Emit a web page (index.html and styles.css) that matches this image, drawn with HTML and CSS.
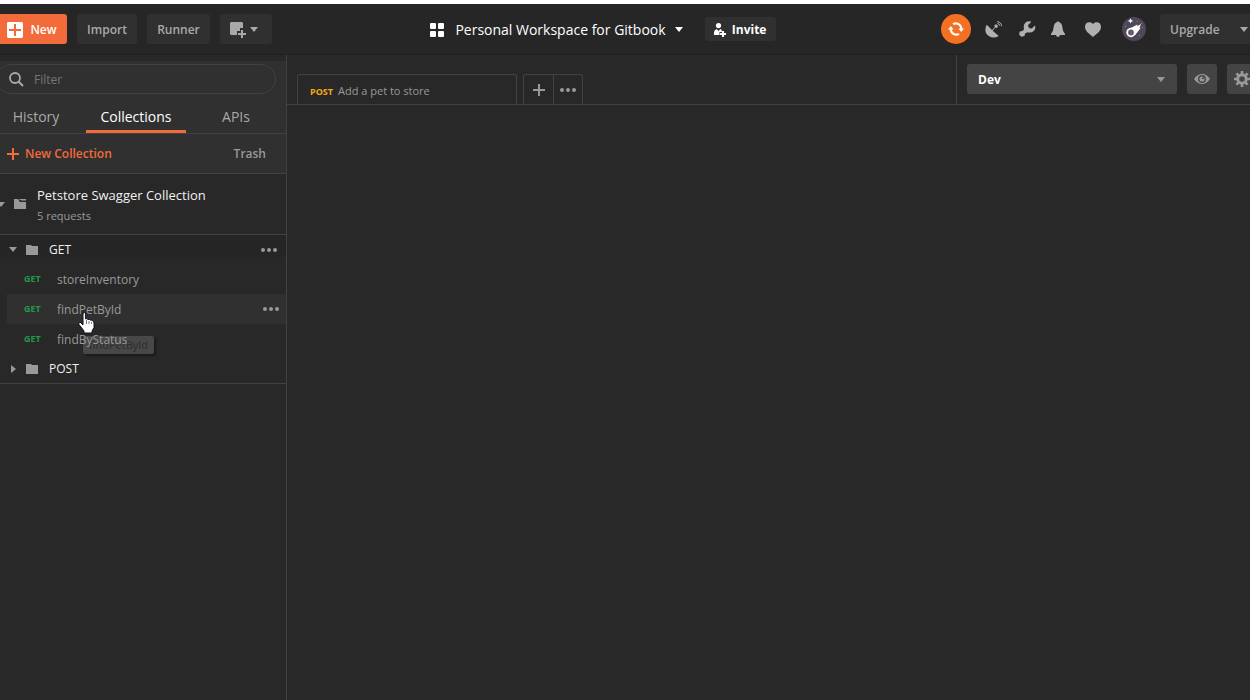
FILE: index.html
```html
<!DOCTYPE html>
<html lang="en">
<head>
<meta charset="utf-8">
<meta name="viewport" content="width=device-width, initial-scale=1">
<title>Personal Workspace for Gitbook</title>
<link rel="stylesheet" href="styles.css">
</head>
<body>
<svg class="defs" aria-hidden="true">
  <symbol id="folder" viewBox="0 0 12 10"><path d="M0 0h5l1 1h6v9H0z"/></symbol>
  <symbol id="dots" viewBox="0 0 16 4"><circle cx="2" cy="2" r="2"/><circle cx="8" cy="2" r="2"/><circle cx="14" cy="2" r="2"/></symbol>
  <symbol id="caret" viewBox="0 0 8 5"><path d="M0 0h8L4 5z"/></symbol>
  <symbol id="plus" viewBox="0 0 12 12"><path d="M5 0h2v5h5v2H7v5H5V7H0V5h5z"/></symbol>
</svg>
<header class="header">
  <div class="header-left">
    <button class="btn btn-new"><svg width="16" height="16" viewBox="0 0 16 16"><path fill-rule="evenodd" d="M1 0h14l1 1v14l-1 1H1l-1-1V1zM7 2v5H2v2h5v5h2V9h5V7H9V2z"/></svg>New</button>
    <button class="btn btn-import">Import</button>
    <button class="btn btn-runner">Runner</button>
    <button class="btn btn-window" aria-label="New window"><svg width="16" height="16" viewBox="0 0 16 16"><path d="M1 0h11l1 1v5h-3v3H7v4H1l-1-1V1zM11 8h2v3h3v2h-3v3h-2v-3H8v-2h3z"/></svg><svg width="8" height="5"><use href="#caret"/></svg></button>
  </div>
  <div class="workspace">
    <button class="workspace-name"><svg class="grid-icon" width="14" height="14" viewBox="0 0 14 14"><rect width="6" height="6" rx="1"/><rect x="8" width="6" height="6" rx="1"/><rect y="8" width="6" height="6" rx="1"/><rect x="8" y="8" width="6" height="6" rx="1"/></svg>Personal Workspace for Gitbook<svg width="8" height="5"><use href="#caret"/></svg></button>
    <button class="btn invite"><svg width="12" height="14" viewBox="0 0 12 14"><circle cx="4.500" cy="2.600" r="2.600"/><path d="M0 12V9.500Q0 7 2.500 6l2 2 2-2q1 .3 1.300 1.500v1.500H5.500v3zM8 8h2v2h2v2h-2v2H8v-2H6v-2h2z"/></svg>Invite</button>
  </div>
  <div class="header-right">
    <button class="icon-btn sync" aria-label="Sync"><svg width="16" height="16" viewBox="0 0 16 16"><path fill="none" stroke="currentColor" stroke-width="2" d="M5 3.200A5.500 5.500 0 0 1 13.300 8M11 12.800A5.500 5.500 0 0 1 2.700 8"/><path d="M10.300 7.500H16L13.200 11zM0 8.500h5.700L2.800 5z"/></svg></button>
    <button class="icon-btn satellite" aria-label="Capture requests"><svg width="17" height="17" viewBox="0 0 17 17"><path d="M1.800 3.800L7 9l3-3-.8-.8.800-1.700h1.800l1 1v1.700L11 7l-.8-.2-2.500 2.900 6 5.300Q8.500 18 3.800 15 .2 12.500.4 8.500 .5 5.500 1.800 3.800z"/><path fill="none" stroke="currentColor" d="M12.500 2.500q2 0 2.200 2.200M12 .7q4.300 0 4.500 4.500"/></svg></button>
    <button class="icon-btn wrench" aria-label="Settings"><svg width="17" height="16" viewBox="0 0 17 16"><path d="M12.500.8L9.300 3.800Q8.800 5.200 10 6.800 11.500 7.800 13 7.200L16 4.500Q17.200 7.500 14.800 10 12 12.300 8.500 11.300L6 12.500 5.500 15 2.500 15.700.3 14 .5 10.800 4.300 9.500 5 7.800Q4 4 6.500 1.500 9.500-.7 12.500.8z"/></svg></button>
    <button class="icon-btn bell" aria-label="Notifications"><svg width="14" height="16" viewBox="0 0 14 16"><path d="M6 1q1-1.600 2 0 3 1 3.300 5 .3 4.500 2.700 7v1H0v-1q2.400-2.500 2.700-7Q3 2 6 1zM5 14h4q-.5 2-2 2t-2-2z"/></svg></button>
    <button class="icon-btn heart" aria-label="Favorites"><svg width="16" height="15" viewBox="0 0 16 15"><path d="M8 2.200C10-.8 16-.5 16 5c0 4-4.500 7-8 10C4.500 12 0 9 0 5 0-.5 6-.8 8 2.200z"/></svg></button>
    <button class="icon-btn avatar" aria-label="Account"><svg width="24" height="24" viewBox="0 0 24 24"><circle cx="12" cy="12" r="12" fill="#50475b"/><path d="M5 13L15.500 7.500l-.3 1.700L19 7l-1.500 4 1 .2L13.200 18Z"/><circle cx="9" cy="15.500" r="4.700"/><circle cx="9" cy="15.500" r="2.900" fill="#655c70"/><path d="M8.500 1.200l.8 1.900 1.900.8-1.900.8-.8 1.900-.8-1.900-1.900-.8 1.900-.8z"/><path fill="#91879b" d="M15 4h1v1h-1zM20 10h1v1h-1zM17 18h1v1h-1zM3 9h1v1H3zM19 6h1v1h-1z"/></svg></button>
    <button class="btn upgrade">Upgrade<svg width="8" height="5"><use href="#caret"/></svg></button>
  </div>
</header>
<div class="body">
  <aside class="sidebar">
    <div class="sidebar-top">
      <label class="filter"><svg width="15" height="15" viewBox="0 0 15 15"><circle cx="6" cy="6" r="5" fill="none" stroke="currentColor" stroke-width="1.800"/><path stroke="currentColor" stroke-width="2" d="M9.500 9.500L14 14"/></svg><input type="text" placeholder="Filter" aria-label="Filter"></label>
      <nav class="side-tabs"><button>History</button><button class="active">Collections</button><button>APIs</button></nav>
      <div class="actions"><button class="new-collection"><svg width="12" height="12"><use href="#plus"/></svg>New Collection</button><button class="trash">Trash</button></div>
    </div>
    <section class="collection">
      <svg class="collection-caret" width="8" height="5"><use href="#caret"/></svg>
      <svg class="folder" width="12" height="10" viewBox="0 0 12 10"><path d="M0 0h4l2 3h6v7H0zM5 0h7v1H6zM7 1.500h5V2H7z"/></svg>
      <div><h2>Petstore Swagger Collection</h2><p>5 requests</p></div>
    </section>
    <ul class="tree">
      <li class="group group-open"><svg class="arrow" width="8" height="5"><use href="#caret"/></svg><svg class="folder" width="12" height="10"><use href="#folder"/></svg><span>GET</span><button class="more" aria-label="Folder actions"><svg width="16" height="4"><use href="#dots"/></svg></button></li>
      <li class="request"><b>GET</b><span>storeInventory</span></li>
      <li class="request hovered"><b>GET</b><span>findPetById</span><button class="more" aria-label="Request actions"><svg width="16" height="4"><use href="#dots"/></svg></button>
        <span class="tooltip" role="tooltip">findPetById</span>
        <svg class="pointer" width="17" height="22" viewBox="0 0 17 22"><path fill="#fff" stroke="#101020" d="M5 13V2q0-1.500 1.300-1.500T7.600 2v5q1.200-1.200 2.400.6 1.400-1 2.400.6 1.500-.6 2.200.8 1.400 0 1.400 2v4.500L14 19v2H6v-2L1 12.500Q.3 10.500 2 10z"/><path stroke="#777" d="M8.500 8v4M11 9v3M13.500 10v2"/></svg>
      </li>
      <li class="request"><b>GET</b><span>findByStatus</span></li>
      <li class="group"><svg class="arrow" width="8" height="8" viewBox="0 0 8 8"><path d="M2 0l5 4-5 4z"/></svg><svg class="folder" width="12" height="10"><use href="#folder"/></svg><span>POST</span></li>
    </ul>
  </aside>
  <main class="main">
    <div class="main-bar">
      <div class="tabs">
        <button class="tab"><b>POST</b>Add a pet to store</button>
        <div class="tab-tools"><button aria-label="New tab"><svg width="12" height="12"><use href="#plus"/></svg></button><button aria-label="Tab options"><svg width="16" height="4"><use href="#dots"/></svg></button></div>
      </div>
      <div class="environment">
        <div class="select-wrap"><select aria-label="Environment"><option>Dev</option></select><svg width="8" height="5"><use href="#caret"/></svg></div>
        <button class="env-btn" aria-label="Environment quick look"><svg width="16" height="10" viewBox="0 0 16 10"><path fill-rule="evenodd" d="M0 5Q3.500 0 8 0t8 5q-3.500 5-8 5T0 5zm4 0a4 4 0 0 0 8 0 4 4 0 0 0-8 0z"/><circle cx="8" cy="5" r="2.600"/><circle cx="9" cy="4.300" r="1" fill="#444"/></svg></button>
        <button class="env-btn" aria-label="Manage environments"><svg width="16" height="16" viewBox="-8 -8 16 16"><circle r="4.300" fill="none" stroke="currentColor" stroke-width="3"/><path stroke="currentColor" stroke-width="2.600" d="M0-8v3M0 5v3M-8 0h3M5 0h3M-5.600-5.600l2 2M3.600 3.600l2 2M-5.600 5.600l2-2M3.600-3.600l2-2"/></svg></button>
      </div>
    </div>
  </main>
</div>
</body>
</html>
```
FILE: styles.css
```css
* { box-sizing: border-box; }
body {
  margin: 0;
  height: 100vh;
  display: flex;
  flex-direction: column;
  overflow: hidden;
  background: #282828;
  border-top: 4px solid #fff;
  color: #a9a9a9;
  font: 12px/18px "Open Sans", sans-serif;
}
button, input, select { font: inherit; color: inherit; }
button { border: 0; padding: 0; background: none; white-space: nowrap; cursor: pointer; }
svg { display: block; flex: none; fill: currentColor; }
.defs { position: absolute; width: 0; height: 0; }

.header {
  flex: none;
  display: flex;
  align-items: center;
  justify-content: space-between;
  height: 51px;
  background: #262626;
  border-bottom: 1px solid #202020;
}
.header-left, .header-right, .workspace, .workspace-name, .btn { display: flex; align-items: center; }
.header-left { gap: 10px; }
.btn {
  height: 30px;
  justify-content: center;
  padding-top: 1px;
  border-radius: 3px;
  background: #303030;
  font-size: 12px;
  font-weight: 600;
}
.btn-new { width: 67px; gap: 7px; padding-right: 3px; background: #f26b3a; color: #fff; border-radius: 0 3px 3px 0; }
.btn-import { width: 60px; }
.btn-runner { width: 63px; }
.btn-window { width: 52px; gap: 4px; padding-right: 4px; }
.workspace { gap: 22px; color: #fff; }
.workspace-name { padding-top: 1px; font-size: 14px; gap: 9px; }
.grid-icon { margin-right: 2px; }
.invite { width: 71px; height: 24px; gap: 6px; font-weight: 700; }
.header-right { padding-left: 7px; }
.icon-btn { display: flex; align-items: center; justify-content: center; height: 30px; color: #b0b0b0; }
.sync { width: 30px; border-radius: 50%; background: #f47023; color: #fff; }
.satellite { margin-left: 14px; }
.wrench { margin-left: 17px; }
.bell { margin-left: 15px; }
.heart { margin-left: 20px; }
.avatar { margin-left: 21px; color: #fff; }
.upgrade { width: 90px; margin-left: 14px; padding-left: 10px; justify-content: flex-start; gap: 20px; border-radius: 3px 0 0 3px; }

.body { flex: 1; display: flex; min-height: 0; }
.sidebar { flex: none; width: 287px; border-right: 1px solid #424242; }
.sidebar-top { padding-top: 9px; background: linear-gradient(#282828 6px, #303030 6px); }
.filter {
  display: flex;
  align-items: center;
  gap: 10px;
  height: 30px;
  margin: 0 10px 0 -4px;
  padding: 0 12px;
  border: 1px solid #414141;
  border-radius: 15px;
}
.filter input { flex: 1; min-width: 0; border: 0; padding: 2px 0 0; outline: 0; background: none; }
.filter input::placeholder { color: #777; opacity: 1; }
.side-tabs { display: flex; height: 40px; margin-left: -14px; border-bottom: 1px solid #424242; font-size: 14px; }
.side-tabs button { flex: 1; padding-top: 9px; border-bottom: 3px solid transparent; }
.side-tabs .active { color: #fff; border-color: #f26b3a; }
.actions { display: flex; align-items: center; justify-content: space-between; height: 40px; padding: 0 20px 0 7px; border-bottom: 1px solid #424242; }
.new-collection { display: flex; align-items: center; gap: 6px; color: #f26b3a; font-weight: 600; }
.trash { color: #999; font-weight: 600; }
.collection { display: flex; align-items: center; height: 61px; border-bottom: 1px solid #424242; color: #999; font-size: 11px; }
.collection-caret { margin-left: -3px; }
.collection .folder { margin: 0 11px 0 9px; }
.collection h2 { margin: 2px 0; color: #f0f0f0; font-size: 13px; font-weight: 400; line-height: 20px; }
.collection p { margin: 0; }

.tree { list-style: none; margin: 0; padding: 0; border-bottom: 1px solid #424242; }
.group { display: flex; align-items: center; height: 29px; padding-left: 9px; color: #999; }
.group-open { background: linear-gradient(#252525 22px, transparent 22px); }
.group span { margin-left: 11px; color: #f0f0f0; }
.group .folder { margin-left: 9px; }
.more { margin-left: auto; margin-right: 9px; color: #999; }
.request { display: flex; align-items: center; height: 30px; margin-left: 7px; padding-left: 17px; color: #999; }
.request b { width: 33px; color: #209a4a; font-size: 9px; }
.request > span:not(.tooltip) { position: relative; z-index: 2; padding-top: 2px; }
.hovered { position: relative; background: #303030; }
.hovered .more { margin-right: 7px; }
.tooltip {
  position: absolute;
  top: 42px;
  left: 76px;
  padding: 0 6px;
  border-radius: 2px;
  background: #484848;
  color: #2c2c2c;
  box-shadow: 2px 2px 2px #1b1b1b;
  font-size: 11px;
}
.pointer { position: absolute; z-index: 3; top: 18px; left: 71px; }

.main { flex: 1; min-width: 0; }
.main-bar { display: flex; height: 50px; border-bottom: 1px solid #424242; }
.tabs { flex: 1; display: flex; align-items: flex-end; gap: 6px; padding-left: 10px; }
.tab { width: 220px; height: 30px; padding: 4px 12px 0; border: 1px solid #424242; border-bottom: 0; border-radius: 3px 3px 0 0; text-align: left; color: #999; font-size: 11px; }
.tab b { margin-right: 5px; color: #f5ab16; font-size: 9px; }
.tab-tools { display: flex; height: 30px; border: 1px solid #424242; border-bottom: 0; border-radius: 3px 3px 0 0; color: #999; }
.tab-tools button { display: flex; align-items: center; justify-content: center; width: 28px; }
.tab-tools button:first-child { width: 30px; border-right: 1px solid #424242; }
.environment { flex: none; display: flex; gap: 10px; width: 294px; padding: 9px 0 10px 10px; border-left: 1px solid #424242; overflow: hidden; }
.select-wrap { flex: none; position: relative; width: 210px; }
.select-wrap select { width: 100%; height: 30px; padding: 1px 11px 0; border: 0; border-radius: 3px; appearance: none; background: #444; color: #fff; font-size: 12px; font-weight: 700; }
.select-wrap svg { position: absolute; top: 13px; right: 12px; color: #999; pointer-events: none; }
.env-btn { flex: none; display: flex; align-items: center; justify-content: center; width: 30px; height: 30px; border-radius: 3px; background: #444; color: #999; }
```
